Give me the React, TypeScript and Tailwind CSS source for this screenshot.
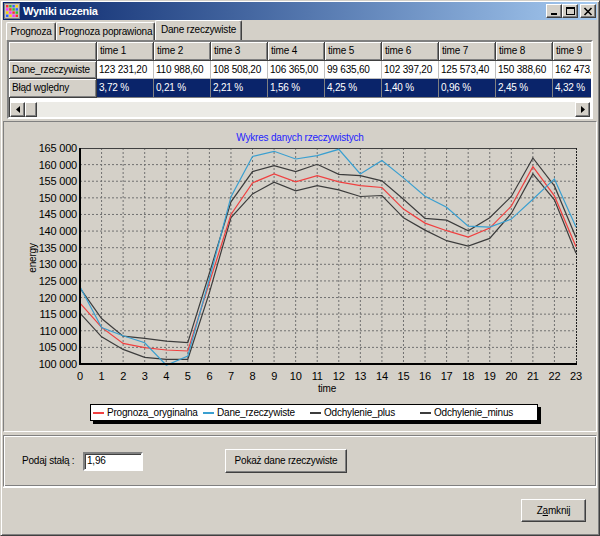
import React from 'react';

const raised =
  'border border-t-white border-l-white border-r-[#404040] border-b-[#404040] shadow-[inset_-1px_-1px_0_#808080]';
const sunken =
  'border-2 border-t-[#808080] border-l-[#808080] border-r-white border-b-white shadow-[inset_1px_1px_0_#404040]';

const times = ['time 1', 'time 2', 'time 3', 'time 4', 'time 5', 'time 6', 'time 7', 'time 8', 'time 9'];
const actual = ['123 231,20', '110 988,60', '108 508,20', '106 365,00', '99 635,60', '102 397,20', '125 573,40', '150 388,60', '162 473,20'];
const errors = ['3,72 %', '0,21 %', '2,21 %', '1,56 %', '4,25 %', '1,40 %', '0,96 %', '2,45 %', '4,32 %'];

const blue = [123231, 110988, 108508, 106365, 99635, 102397, 125573, 150388, 162473, 164000, 161700, 162700, 164600, 157200, 161200, 156000, 150500, 147200, 141500, 141200, 143600, 149600, 155700, 141200];
const red = [118300, 111000, 106200, 104900, 104200, 103900, 124500, 145000, 154500, 157200, 154800, 156700, 154800, 153700, 153100, 146600, 142400, 140100, 138200, 140900, 147500, 159400, 150600, 135300];
const upper = [122800, 113700, 108400, 107700, 106900, 106400, 127300, 148800, 157900, 159700, 157900, 160100, 157100, 156700, 155100, 149600, 143800, 143300, 140100, 144000, 150400, 162000, 153600, 138100];
const lower = [115300, 108200, 104400, 102000, 101400, 101400, 121500, 144100, 151200, 154700, 152100, 153700, 152400, 150400, 150700, 144000, 140300, 137100, 135500, 137800, 145300, 157200, 149400, 133300];

// plot box in page coordinates
const X0 = 80;
const X1 = 576;
const Y0 = 148;
const Y1 = 364;
const px = (i: number) => X0 + (i * (X1 - X0)) / 23;
const py = (v: number) => Y0 + ((165000 - v) * (Y1 - Y0)) / 65000;
const pts = (d: number[]) => d.map((v, i) => `${px(i).toFixed(1)},${py(v).toFixed(1)}`).join(' ');

const AppIcon = () => (
  <svg width="16" height="16" viewBox="0 0 16 16">
    <rect x="0.5" y="0.5" width="15" height="15" fill="#c0c0c0" stroke="#808080" />
    {[0, 1, 2, 3].map(r =>
      [0, 1, 2, 3].map(c => (
        <rect
          key={`${r}-${c}`}
          x={2 + c * 3.2}
          y={2 + r * 3.2}
          width="2.4"
          height="2.4"
          fill={['#ff3030', '#30c030', '#3060ff', '#ffd000', '#ff30ff'][(r * 4 + c) % 5]}
        />
      ))
    )}
  </svg>
);

const WinBtn = ({ kind }: { kind: 'min' | 'max' | 'close' }) => (
  <div className={`w-[16px] h-[14px] bg-[#d4d0c8] flex items-center justify-center ${raised}`}>
    <svg width="10" height="9" viewBox="0 0 10 9">
      {kind === 'min' && <rect x="2" y="6" width="6" height="2" fill="#000" />}
      {kind === 'max' && (
        <>
          <rect x="1.5" y="0.5" width="8" height="7" fill="none" stroke="#000" />
          <rect x="1" y="0" width="9" height="2" fill="#000" />
        </>
      )}
      {kind === 'close' && <path d="M1.5 1 L8.5 8 M8.5 1 L1.5 8" stroke="#000" strokeWidth="1.6" />}
    </svg>
  </div>
);

const Tab = ({ label, w, active }: { label: string; w: number; active?: boolean }) => (
  <div
    className={`flex items-center justify-center whitespace-nowrap border-t border-l border-r border-t-white border-l-white border-r-[#404040] shadow-[inset_-1px_0_0_#808080] rounded-t-[2px] ${
      active ? 'h-[20px] -mx-[2px] relative z-10 bg-[#d4d0c8] pb-[1px]' : 'h-[18px]'
    }`}
    style={{ width: w }}
  >
    {label}
  </div>
);

const HeadCell = ({ w, children }: { w: number; children?: React.ReactNode }) => (
  <div
    className="shrink-0 h-full bg-[#d4d0c8] border-r border-b border-r-[#404040] border-b-[#404040] shadow-[inset_1px_1px_0_white,inset_-1px_-1px_0_#808080] pl-[3px] flex items-center overflow-hidden whitespace-nowrap"
    style={{ width: w }}
  >
    {children}
  </div>
);

const DataCell = ({ w, sel, children }: { w: number; sel?: boolean; children: React.ReactNode }) => (
  <div
    className={`shrink-0 h-full border-r border-b pl-[2px] flex items-center overflow-hidden whitespace-nowrap ${
      sel ? 'bg-[#0a246a] text-white border-[#808080]' : 'bg-white border-[#c0c0c0]'
    }`}
    style={{ width: w }}
  >
    {children}
  </div>
);

const Grid = () => (
  <div className={`mx-[4px] h-[79px] shrink-0 bg-white flex flex-col ${sunken}`}>
    <div className="flex h-[19px] overflow-hidden">
      <HeadCell w={88} />
      {times.map(t => (
        <HeadCell key={t} w={57}>
          {t}
        </HeadCell>
      ))}
    </div>
    <div className="flex h-[18px] overflow-hidden">
      <HeadCell w={88}>Dane_rzeczywiste</HeadCell>
      {actual.map((v, i) => (
        <DataCell key={i} w={57}>
          {v}
        </DataCell>
      ))}
    </div>
    <div className="flex h-[19px] overflow-hidden">
      <HeadCell w={88}>Błąd wględny</HeadCell>
      {errors.map((v, i) => (
        <DataCell key={i} w={57} sel>
          {v}
        </DataCell>
      ))}
    </div>
    <div className="h-[4px]" />
    <div className="flex h-[15px] mx-[1px] bg-[#ecebe6]">
      <div className={`w-[15px] h-full bg-[#d4d0c8] flex items-center justify-center ${raised}`}>
        <svg width="4" height="7" viewBox="0 0 4 7">
          <path d="M4 0 L0 3.5 L4 7 Z" fill="#000" />
        </svg>
      </div>
      <div className={`w-[12px] h-full bg-[#d4d0c8] ${raised}`} />
      <div className="flex-1" />
      <div className={`w-[15px] h-full bg-[#d4d0c8] flex items-center justify-center ${raised}`}>
        <svg width="4" height="7" viewBox="0 0 4 7">
          <path d="M0 0 L4 3.5 L0 7 Z" fill="#000" />
        </svg>
      </div>
    </div>
  </div>
);

const yTicks = Array.from({ length: 14 }, (_, k) => 165000 - k * 5000);
const fmt = (v: number) => `${Math.floor(v / 1000)} 000`;

const Chart = () => (
  <svg width="592" height="256" viewBox="4 140 592 256" className="block shrink-0 -mt-[4px]">
    {/* grid */}
    {yTicks.slice(1, 13).map(v => (
      <line key={v} x1={X0} x2={X1} y1={py(v)} y2={py(v)} stroke="#707070" strokeDasharray="2 2" />
    ))}
    {Array.from({ length: 22 }, (_, i) => i + 1).map(i => (
      <line key={i} x1={px(i)} x2={px(i)} y1={Y0} y2={Y1} stroke="#707070" strokeDasharray="2 2" />
    ))}
    <line x1={X0} x2={X1} y1={Y0 + 0.5} y2={Y0 + 0.5} stroke="#404040" />
    <line x1={X1 + 0.5} x2={X1 + 0.5} y1={Y0} y2={Y1} stroke="#202020" strokeDasharray="2 1" />
    {/* series */}
    <polyline points={pts(upper)} fill="none" stroke="#3c3c3c" strokeWidth="1.2" />
    <polyline points={pts(lower)} fill="none" stroke="#3c3c3c" strokeWidth="1.2" />
    <polyline points={pts(red)} fill="none" stroke="#f04040" strokeWidth="1.2" />
    <polyline points={pts(blue)} fill="none" stroke="#3a9fd0" strokeWidth="1.2" />
    {/* axes */}
    <line x1={X0} x2={X0} y1={Y0} y2={Y1 + 1} stroke="#000" strokeWidth="2" />
    <line x1={X0} x2={X1 + 1} y1={Y1} y2={Y1} stroke="#000" strokeWidth="2" />
    <g fontFamily="'Liberation Sans', Arial, sans-serif" fontSize="11" fill="#000">
      {yTicks.map(v => (
        <text key={v} x={X0 - 3} y={py(v) + 4} textAnchor="end">
          {fmt(v)}
        </text>
      ))}
      {Array.from({ length: 24 }, (_, i) => (
        <text key={i} x={px(i)} y={380} textAnchor="middle">
          {i}
        </text>
      ))}
      <text x={327} y={392} textAnchor="middle" fontSize="10">
        time
      </text>
      <text x={0} y={0} textAnchor="middle" fontSize="10" transform="translate(36 258) rotate(-90)">
        energy
      </text>
    </g>
  </svg>
);

const LegendItem = ({ color, label, w }: { color: string; label: string; w: number }) => (
  <div className="flex items-center shrink-0" style={{ width: w }}>
    <div className="w-[11px] h-[2px] mr-[3px]" style={{ backgroundColor: color }} />
    <span>{label}</span>
  </div>
);

export default function App() {
  return (
    <div className="w-[600px] h-[536px] bg-[#d4d0c8] text-black text-[10px] tracking-[-0.2px] leading-none font-['Liberation_Sans',Arial,sans-serif] border border-t-[#d4d0c8] border-l-[#d4d0c8] border-r-[#404040] border-b-[#404040] shadow-[inset_1px_1px_0_white,inset_-1px_-1px_0_#808080] pt-[1px] px-[2px] pb-[2px] flex flex-col overflow-hidden">
      {/* title bar */}
      <div className="h-[18px] shrink-0 flex items-center bg-linear-to-r from-[#0a246a] to-[#a6caf0] px-[1px]">
        <AppIcon />
        <span className="ml-[3px] text-white font-bold text-[11px] tracking-[-0.3px]">Wyniki uczenia</span>
        <div className="ml-auto flex items-center">
          <WinBtn kind="min" />
          <WinBtn kind="max" />
          <div className="w-[2px]" />
          <WinBtn kind="close" />
        </div>
      </div>

      {/* tabs */}
      <div className="flex items-end h-[20px] shrink-0 pl-[3px]">
        <Tab label="Prognoza" w={50} />
        <Tab label="Prognoza poprawiona" w={99} />
        <div className="w-[2px]" />
        <Tab label="Dane rzeczywiste" w={87} active />
      </div>
      <Grid />

      {/* chart */}
      <div className="mt-[2px] h-[311px] shrink-0 border border-t-[#808080] border-l-[#808080] border-r-white border-b-white flex flex-col">
        <div className="h-[22px] shrink-0 pt-[11px] text-center text-[#1f1fff]">Wykres danych rzeczywistych</div>
        <Chart />
        <div className="mt-[8px] ml-[86px] w-[448px] h-[17px] shrink-0 bg-white border border-black shadow-[3px_3px_0_#000] flex items-center pl-[2px]">
          <LegendItem color="#f04040" label="Prognoza_oryginalna" w={110} />
          <LegendItem color="#3a9fd0" label="Dane_rzeczywiste" w={107} />
          <LegendItem color="#3c3c3c" label="Odchylenie_plus" w={110} />
          <LegendItem color="#3c3c3c" label="Odchylenie_minus" w={110} />
        </div>
      </div>

      {/* parameters */}
      <div className="mt-[3px] h-[52px] shrink-0 border border-t-[#808080] border-l-[#808080] border-r-white border-b-white shadow-[inset_1px_1px_0_white,inset_-1px_-1px_0_#808080] flex items-center pl-[18px]">
        <span className="w-[61px] shrink-0">Podaj stałą :</span>
        <div className={`w-[60px] h-[19px] bg-white flex items-center pl-[2px] ${sunken}`}>1,96</div>
        <div className={`ml-[82px] w-[122px] h-[24px] bg-[#d4d0c8] flex items-center justify-center ${raised}`}>
          Pokaż dane rzeczywiste
        </div>
      </div>

      {/* footer */}
      <div className="flex-1 border-t border-t-white flex items-center justify-end pr-[11px]">
        <div className={`w-[65px] h-[23px] bg-[#d4d0c8] flex items-center justify-center ${raised}`}>
          <span>
            Z<span className="underline">a</span>mknij
          </span>
        </div>
      </div>
    </div>
  );
}
